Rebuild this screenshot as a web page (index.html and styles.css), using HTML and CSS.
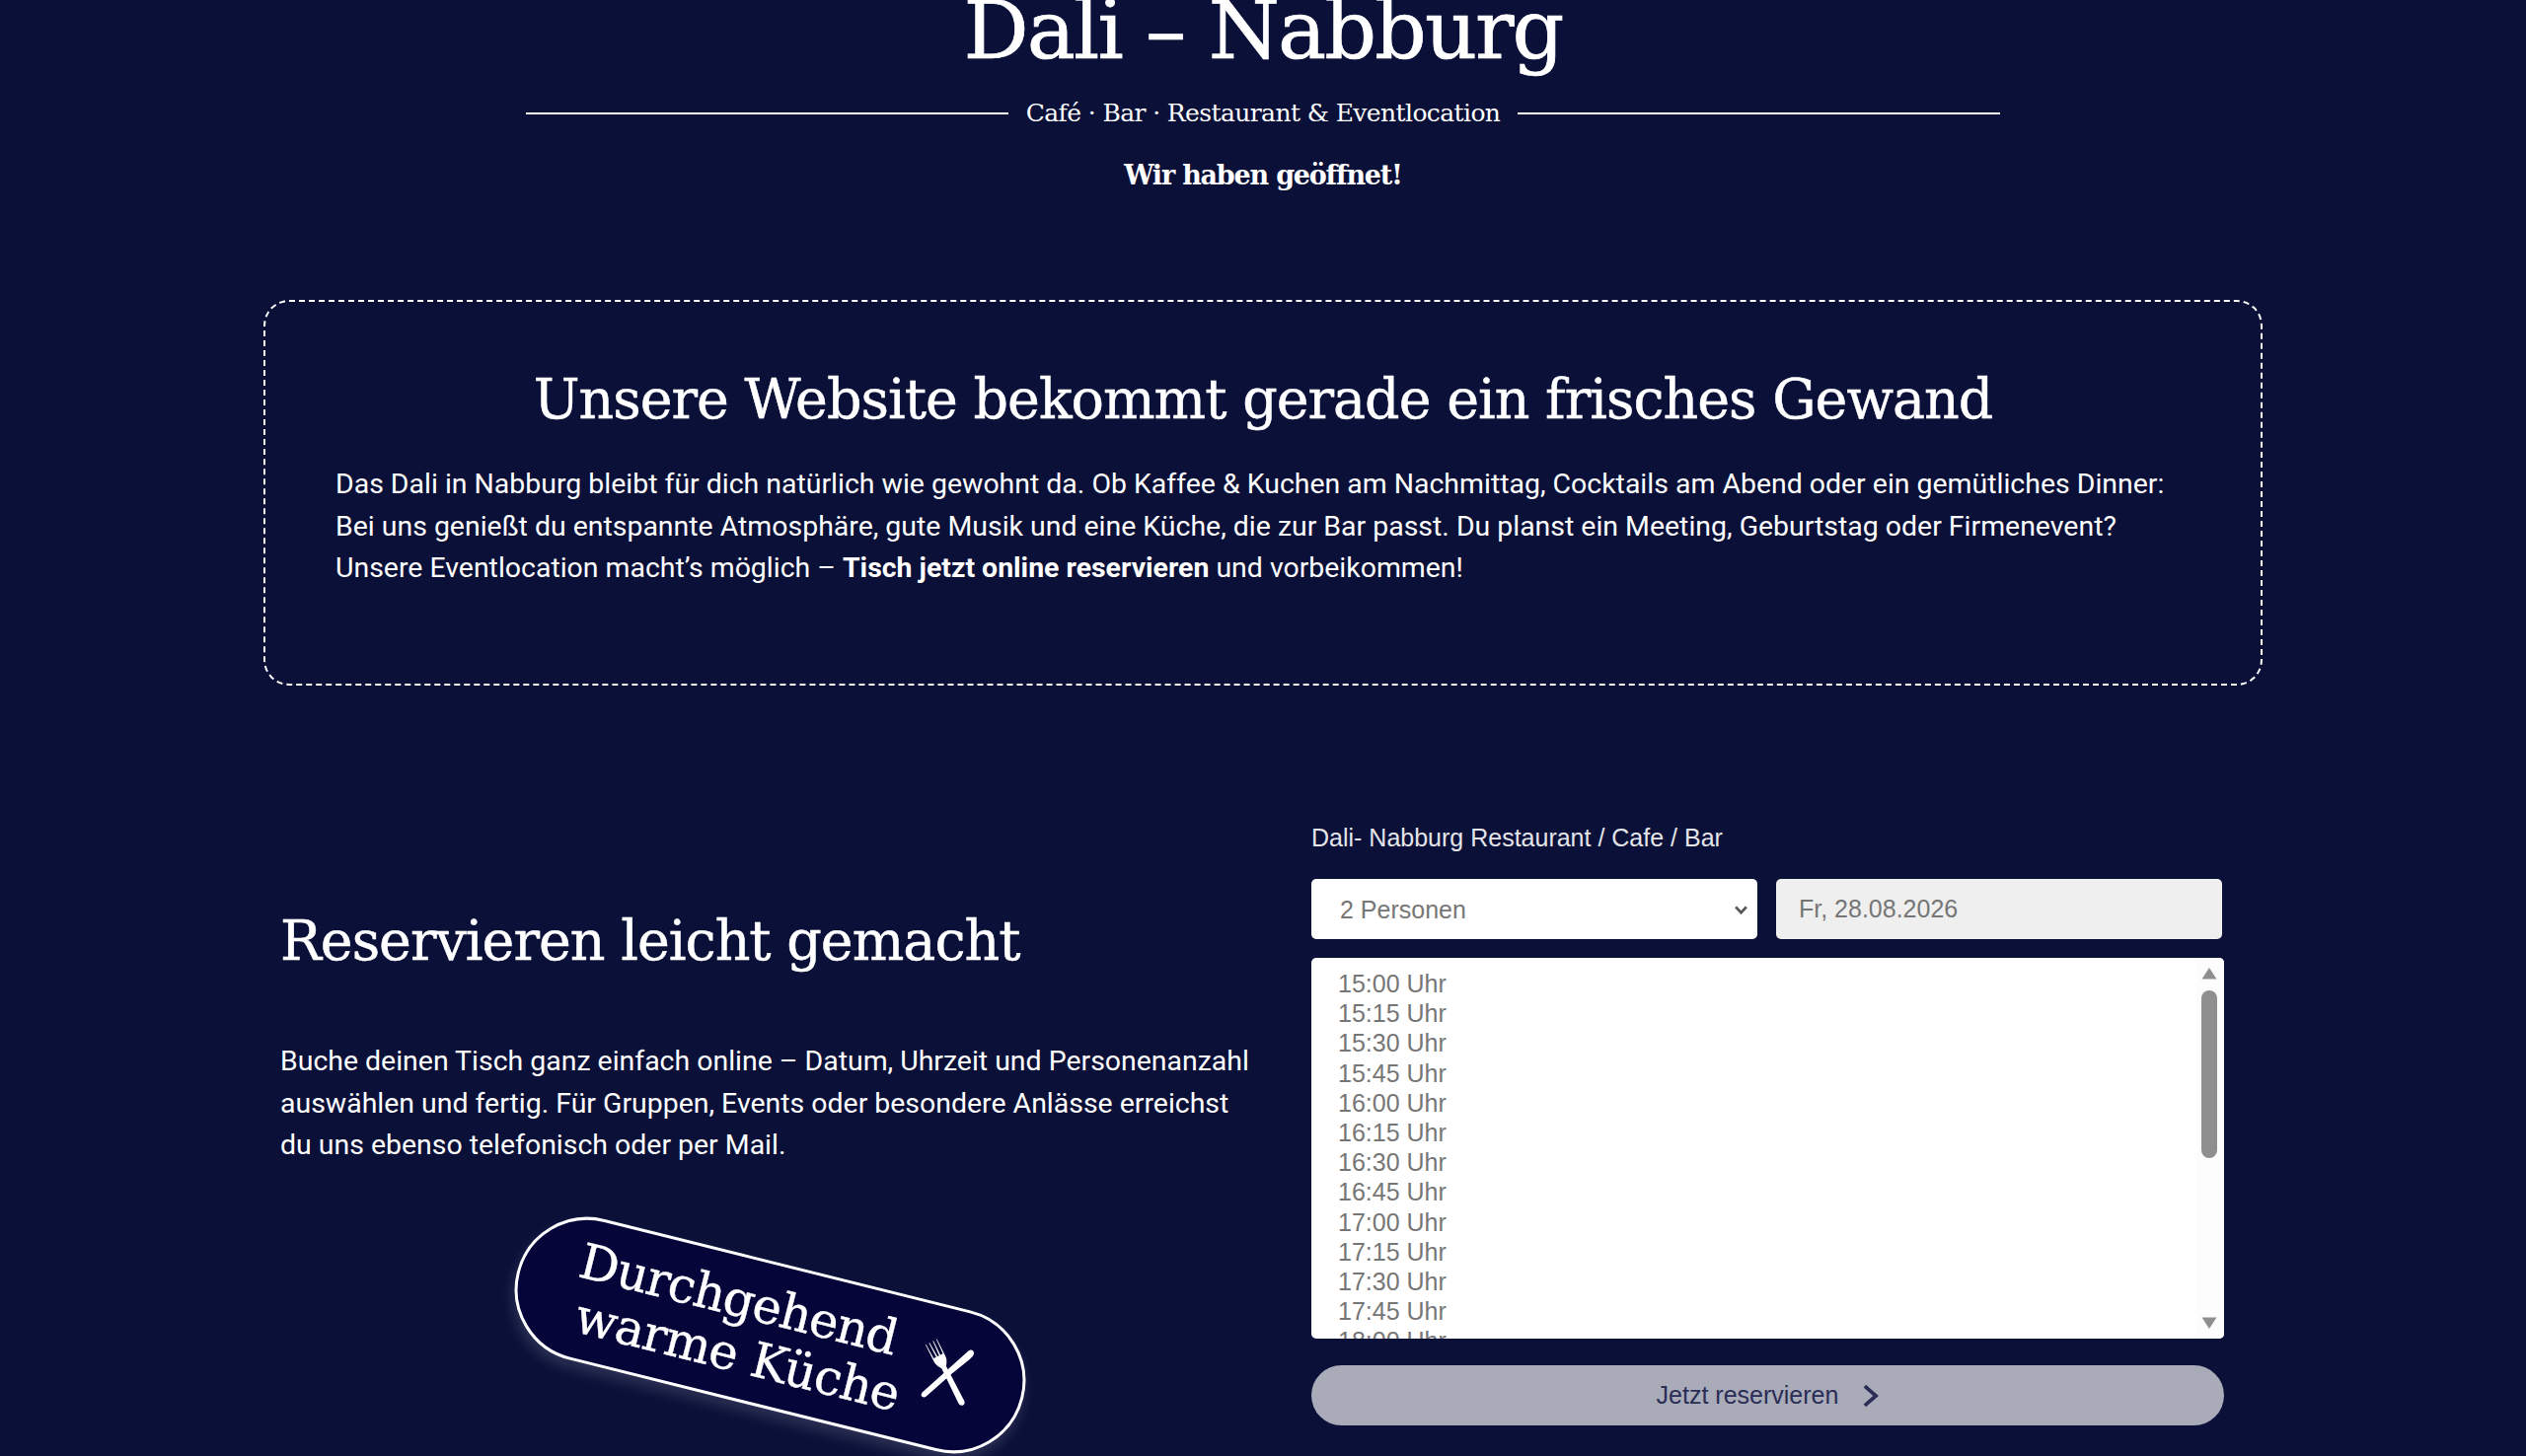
FILE: index.html
```html
<!DOCTYPE html>
<html lang="de">
<head>
<meta charset="utf-8">
<title>Dali – Nabburg</title>
<link rel="stylesheet" href="styles.css">
</head>
<body>
<div class="page">
  <header class="hero">
    <h1 class="hero-title">Dali – Nabburg</h1>
    <div class="hero-rule">
      <span class="rule-line"></span>
      <span class="hero-sub">Café · Bar · Restaurant &amp; Eventlocation</span>
      <span class="rule-line"></span>
    </div>
    <p class="hero-open">Wir haben geöffnet!</p>
  </header>

  <section class="notice">
    <h2 class="notice-title">Unsere Website bekommt gerade ein frisches Gewand</h2>
    <p class="notice-text">Das Dali in Nabburg bleibt für dich natürlich wie gewohnt da. Ob Kaffee &amp; Kuchen am Nachmittag, Cocktails am Abend oder ein gemütliches Dinner:<br>Bei uns genießt du entspannte Atmosphäre, gute Musik und eine Küche, die zur Bar passt. Du planst ein Meeting, Geburtstag oder Firmenevent?<br>Unsere Eventlocation macht’s möglich – <strong>Tisch jetzt online reservieren</strong> und vorbeikommen!</p>
  </section>

  <section class="reserve">
    <div class="reserve-left">
      <h2 class="reserve-title">Reservieren leicht gemacht</h2>
      <p class="reserve-text">Buche deinen Tisch ganz einfach online – Datum, Uhrzeit und Personenanzahl auswählen und fertig. Für Gruppen, Events oder besondere Anlässe erreichst du uns ebenso telefonisch oder per Mail.</p>
      <div class="badge-wrap">
        <div class="badge">
          <span class="badge-text">Durchgehend<span class="badge-line">warme Küche</span></span>
          <svg class="badge-icon" viewBox="-40 -40 80 80" aria-hidden="true">
            <g transform="rotate(-40.6)" fill="#fff">
              <path d="M-6.5 -36 L-5.8 -36 L-5.2 -20 L-2.4 -20 L-2.6 -36 L-1.8 -36 L-1 -20 L1 -20 L1.8 -36 L2.6 -36 L2.4 -20 L5.2 -20 L5.8 -36 L6.5 -36 L6.5 -17 C6.5 -12 3.5 -9 2.6 -7 L3.2 32 C3.2 37 -3.2 37 -3.2 32 L-2.6 -7 C-3.5 -9 -6.5 -12 -6.5 -17 Z"/>
            </g>
            <g transform="rotate(34)" fill="#fff">
              <path d="M0.5 -35 C4 -35 4.6 -31 4.4 -26 L3.2 -4 L2.8 31 C2.8 35.5 -2.8 35.5 -2.8 31 L-2.8 -30 C-2.8 -33 -1.5 -35 0.5 -35 Z"/>
            </g>
          </svg>
        </div>
      </div>
    </div>
    <form class="booking">
      <div class="booking-label">Dali- Nabburg Restaurant / Cafe / Bar</div>
      <div class="booking-row">
        <div class="select-wrap">
          <select class="field field-select"><option>2 Personen</option></select>
          <svg class="select-chevron" viewBox="0 0 16 10" aria-hidden="true"><path d="M2 1.5 L8 8 L14 1.5" fill="none" stroke="currentColor" stroke-width="3"/></svg>
        </div>
        <input class="field field-date" type="text" value="Fr, 28.08.2026" readonly>
      </div>
      <div class="slots">
        <ul class="slot-list">
          <li>15:00 Uhr</li><li>15:15 Uhr</li><li>15:30 Uhr</li><li>15:45 Uhr</li>
          <li>16:00 Uhr</li><li>16:15 Uhr</li><li>16:30 Uhr</li><li>16:45 Uhr</li>
          <li>17:00 Uhr</li><li>17:15 Uhr</li><li>17:30 Uhr</li><li>17:45 Uhr</li>
          <li>18:00 Uhr</li>
        </ul>
        <div class="scrollbar">
          <svg class="scroll-arrow scroll-up" viewBox="0 0 16 13"><path d="M8 1 L15.5 12.5 L.5 12.5 Z"/></svg>
          <span class="scroll-thumb"></span>
          <svg class="scroll-arrow scroll-down" viewBox="0 0 16 13"><path d="M8 12 L15.5 .5 L.5 .5 Z"/></svg>
        </div>
      </div>
      <button class="submit" type="button">Jetzt reservieren
        <svg class="submit-chevron" viewBox="0 0 12 18" aria-hidden="true"><path d="M2 2 L10 9 L2 16" fill="none" stroke="currentColor" stroke-width="2.6"/></svg>
      </button>
    </form>
  </section>
</div>
</body>
</html>
```

FILE: styles.css
```css
* { box-sizing: border-box; }
html, body { margin: 0; height: 1476px; overflow: hidden; background: #0a1038; }
body { color: #fff; font-family: Roboto, "Liberation Sans", sans-serif; }
.page { width: 2026px; margin: -25px auto 0; }

.hero { text-align: center; }
.hero-title {
  margin: 0;
  font: 400 82.6px/110px "DejaVu Serif", serif;
  letter-spacing: -2px;
  -webkit-text-stroke: 0.7px #fff;
}
.hero-rule {
  width: 1494px;
  margin: 0 auto;
  display: flex;
  align-items: center;
  gap: 18px;
  height: 60px;
}
.rule-line { flex: 1; height: 2px; background: #fff; }
.hero-sub { font: 400 25px/30px "DejaVu Serif", serif; letter-spacing: -0.6px; }
.hero-open { margin: 15px 0 0; font: 700 27px/36px "DejaVu Serif", serif; letter-spacing: -1.2px; }

.notice {
  margin-top: 108px;
  height: 391px;
  border: 2px dashed #fff;
  border-radius: 26px;
  padding: 61px 71px 0;
}
.notice-title {
  margin: 0;
  text-align: center;
  font: 400 55.5px/76px "DejaVu Serif", serif;
  letter-spacing: -1px;
  -webkit-text-stroke: 0.5px #fff;
}
.notice-text {
  margin: 27px 0 0;
  font-size: 28.45px;
  line-height: 42.6px;
  white-space: nowrap;
}
.notice-text strong { font-weight: 700; }

.reserve {
  margin-top: 118px;
  display: grid;
  grid-template-columns: 1045px 925px;
  padding-left: 17px;
}
.reserve-left { padding-top: 103px; }
.reserve-title {
  margin: 0;
  font: 400 55.5px/76px "DejaVu Serif", serif;
  letter-spacing: -1px;
  -webkit-text-stroke: 0.5px #fff;
}
.reserve-text {
  margin: 63px 0 0;
  width: 990px;
  font-size: 28.45px;
  line-height: 42.6px;
}
.badge-wrap { margin-top: 97px; padding-left: 232px; }
.badge {
  width: 529px;
  height: 147px;
  display: flex;
  align-items: center;
  justify-content: space-between;
  padding: 0 38px 0 57px;
  background: #05053a;
  border: 3px solid #fff;
  border-radius: 74px;
  transform: rotate(14deg);
  box-shadow: 0 8px 14px rgba(255, 255, 255, .14);
}
.badge-text {
  font: 400 49.5px/55px "DejaVu Serif", serif;
  letter-spacing: -1px;
  white-space: nowrap;
  -webkit-text-stroke: 0.4px #fff;
}
.badge-line { display: block; margin-left: 9px; letter-spacing: -0.7px; }
.badge-icon { width: 80px; height: 80px; flex: none; margin-bottom: 12px; }

.booking { padding-top: 22px; font-family: "Liberation Sans", Arial, sans-serif; }
.booking-label { font-size: 25px; line-height: 28px; color: #e4e5ea; }
.booking-row { display: flex; gap: 19px; margin-top: 28px; width: 923px; }
.select-wrap { position: relative; width: 452px; color: #555; }
.select-chevron { position: absolute; top: 27px; right: 9px; width: 15px; height: 9px; pointer-events: none; }
.field {
  width: 452px;
  height: 61px;
  border: 0;
  border-radius: 5px;
  font: 400 25px "Liberation Sans", Arial, sans-serif;
  color: #767676;
  outline: none;
}
.field-select { display: block; appearance: none; background: #fff; padding-left: 29px; }
.field-date { background: #efefef; padding-left: 23px; }
.slots {
  position: relative;
  margin-top: 19px;
  height: 386px;
  background: #fff;
  border-radius: 5px;
  overflow: hidden;
}
.slot-list {
  margin: 0;
  padding: 11px 0 0 27px;
  list-style: none;
  font-size: 25px;
  line-height: 30.2px;
  color: #767676;
}
.scrollbar {
  position: absolute;
  top: 0;
  right: 0;
  bottom: 0;
  width: 28px;
  background: #fdfdfd;
}
.scroll-arrow { position: absolute; left: 5px; width: 16px; height: 13px; fill: #8f8f8f; }
.scroll-up { top: 9px; }
.scroll-down { bottom: 9px; }
.scroll-thumb {
  position: absolute;
  top: 33px;
  left: 5px;
  width: 16px;
  height: 170px;
  border-radius: 8px;
  background: #8f8f8f;
}
.submit {
  width: 100%;
  height: 61px;
  margin-top: 27px;
  border: 0;
  border-radius: 31px;
  background: #a9abb9;
  color: #2a2d55;
  font: 400 25px "Liberation Sans", Arial, sans-serif;
  display: flex;
  align-items: center;
  justify-content: center;
  gap: 24px;
}
.submit-chevron { width: 17px; height: 26px; }
```
